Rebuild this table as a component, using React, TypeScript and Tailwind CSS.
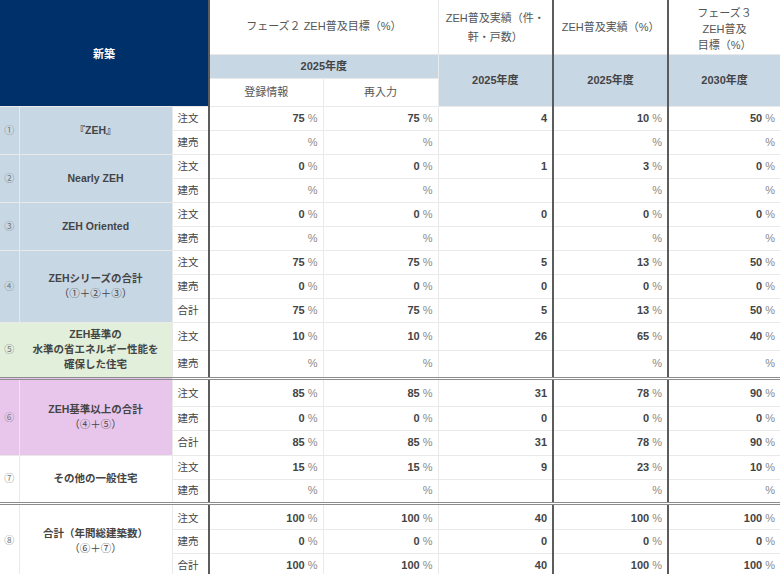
type Row = [string, string, string, string, string, string];

type Group = {
  no: string;
  label: string[];
  sub?: string;
  bg: string;
  tall?: boolean;
  sep?: boolean;
  rows: Row[];
};

const groups: Group[] = [
  {
    no: "①",
    label: ["『ZEH』"],
    bg: "bg-[#c8d7e4]",
    rows: [
      ["注文", "75", "75", "4", "10", "50"],
      ["建売", "", "", "", "", ""],
    ],
  },
  {
    no: "②",
    label: ["Nearly ZEH"],
    bg: "bg-[#c8d7e4]",
    rows: [
      ["注文", "0", "0", "1", "3", "0"],
      ["建売", "", "", "", "", ""],
    ],
  },
  {
    no: "③",
    label: ["ZEH Oriented"],
    bg: "bg-[#c8d7e4]",
    rows: [
      ["注文", "0", "0", "0", "0", "0"],
      ["建売", "", "", "", "", ""],
    ],
  },
  {
    no: "④",
    label: ["ZEHシリーズの合計"],
    sub: "（①＋②＋③）",
    bg: "bg-[#c8d7e4]",
    rows: [
      ["注文", "75", "75", "5", "13", "50"],
      ["建売", "0", "0", "0", "0", "0"],
      ["合計", "75", "75", "5", "13", "50"],
    ],
  },
  {
    no: "⑤",
    label: ["ZEH基準の", "水準の省エネルギー性能を", "確保した住宅"],
    bg: "bg-[#e2efda]",
    tall: true,
    rows: [
      ["注文", "10", "10", "26", "65", "40"],
      ["建売", "", "", "", "", ""],
    ],
  },
  {
    no: "⑥",
    label: ["ZEH基準以上の合計"],
    sub: "（④＋⑤）",
    bg: "bg-[#e8c6ec]",
    sep: true,
    rows: [
      ["注文", "85", "85", "31", "78", "90"],
      ["建売", "0", "0", "0", "0", "0"],
      ["合計", "85", "85", "31", "78", "90"],
    ],
  },
  {
    no: "⑦",
    label: ["その他の一般住宅"],
    bg: "bg-white",
    rows: [
      ["注文", "15", "15", "9", "23", "10"],
      ["建売", "", "", "", "", ""],
    ],
  },
  {
    no: "⑧",
    label: ["合計（年間総建築数）"],
    sub: "（⑥＋⑦）",
    bg: "bg-white",
    sep: true,
    rows: [
      ["注文", "100", "100", "40", "100", "100"],
      ["建売", "0", "0", "0", "0", "0"],
      ["合計", "100", "100", "40", "100", "100"],
    ],
  },
];

function Pct({ v }: { v: string }) {
  return (
    <>
      {v && <span className="font-bold text-[#444]">{v} </span>}
      <span className="text-[#8a8a8a]">%</span>
    </>
  );
}

const cell = "border border-[#e9e9e9] p-0";
const sepTop = "border-t-[3px] border-t-[#8c8c8c] border-double";
const darkL = "border-l-2 border-l-[#5c5c5c]";

// row heights tuned to the sheet; the rows under a double rule sit a bit lower
function rowHeight(g: Group, i: number) {
  if (g.tall) return "h-[28px]";
  if (g.sep && i === 0) return g.no === "⑥" ? "h-[28px]" : "h-[26px]";
  if (g.no === "⑥" && i === 2) return "h-[25px]";
  return "h-[24px]";
}

function rowPad(g: Group, i: number) {
  if (!g.sep || i !== 0) return "";
  return g.no === "⑥" ? "pt-[2px]" : "pt-[3px]";
}

export default function App() {
  return (
    <div className="w-[780px] h-[574px] overflow-hidden bg-white font-['Liberation_Sans','Noto_Sans_CJK_JP',sans-serif] text-[#444]">
      <table className="w-[780px] table-fixed border-collapse text-[11px] leading-[15px]">
        <colgroup>
          <col className="w-[19px]" />
          <col className="w-[153px]" />
          <col className="w-[37px]" />
          <col className="w-[114px]" />
          <col className="w-[115px]" />
          <col className="w-[115px]" />
          <col className="w-[115px]" />
          <col className="w-[112px]" />
        </colgroup>
        <thead>
          <tr className="h-[54px]">
            <th
              rowSpan={3}
              colSpan={3}
              className="border-0 bg-[#00306a] text-white font-bold text-[11px] pt-1"
            >
              新築
            </th>
            <th colSpan={2} className={`${cell} ${darkL} border-t-0 font-normal text-[#555]`}>
              フェーズ２ ZEH普及目標（%）
            </th>
            <th className={`${cell} border-t-0 font-normal text-[#555] leading-[19px] pt-[3px]`}>
              ZEH普及実績（件・
              <br />
              軒・戸数）
            </th>
            <th className={`${cell} ${darkL} border-t-0 font-normal text-[#555] pt-[2px]`}>
              ZEH普及実績（%）
            </th>
            <th className={`${cell} ${darkL} border-t-0 border-r-0 font-normal text-[#555] leading-[16px] pt-1`}>
              フェーズ３
              <br />
              ZEH普及
              <br />
              目標（%）
            </th>
          </tr>
          <tr className="h-[24px]">
            <th colSpan={2} className={`${cell} ${darkL} bg-[#c8d7e4] font-bold`}>
              2025年度
            </th>
            <th rowSpan={2} className={`${cell} bg-[#c8d7e4] font-bold`}>
              2025年度
            </th>
            <th rowSpan={2} className={`${cell} ${darkL} bg-[#c8d7e4] font-bold`}>
              2025年度
            </th>
            <th rowSpan={2} className={`${cell} ${darkL} border-r-0 bg-[#c8d7e4] font-bold`}>
              2030年度
            </th>
          </tr>
          <tr className="h-[28px]">
            <th className={`${cell} ${darkL} font-normal text-[#555]`}>登録情報</th>
            <th className={`${cell} font-normal text-[#555]`}>再入力</th>
          </tr>
        </thead>
        <tbody>
          {groups.map((g) =>
            g.rows.map((r, i) => {
              const top = g.sep && i === 0 ? sepTop : "";
              const pad = rowPad(g, i);
              return (
                <tr key={g.no + i} className={rowHeight(g, i)}>
                  {i === 0 && (
                    <>
                      <td
                        rowSpan={g.rows.length}
                        className={`${cell} ${top} border-l-0 ${g.bg} text-center text-[10px] text-[#777]`}
                      >
                        {g.no}
                      </td>
                      <td
                        rowSpan={g.rows.length}
                        className={`${cell} ${top} ${g.bg} text-center font-bold text-[10.5px]`}
                      >
                        {g.label.map((l) => (
                          <div key={l}>{l}</div>
                        ))}
                        {g.sub && <div className="font-normal">{g.sub}</div>}
                      </td>
                    </>
                  )}
                  <td className={`${cell} ${top} ${pad} pl-[5px] text-[10.5px]`}>{r[0]}</td>
                  <td className={`${cell} ${top} ${pad} ${darkL} text-right pr-[5px]`}>
                    <Pct v={r[1]} />
                  </td>
                  <td className={`${cell} ${top} ${pad} text-right pr-[5px]`}>
                    <Pct v={r[2]} />
                  </td>
                  <td className={`${cell} ${top} ${pad} text-right pr-[5px] font-bold`}>{r[3]}</td>
                  <td className={`${cell} ${top} ${pad} ${darkL} text-right pr-[5px]`}>
                    <Pct v={r[4]} />
                  </td>
                  <td className={`${cell} ${top} ${pad} ${darkL} border-r-0 text-right pr-[5px]`}>
                    <Pct v={r[5]} />
                  </td>
                </tr>
              );
            })
          )}
        </tbody>
      </table>
    </div>
  );
}
